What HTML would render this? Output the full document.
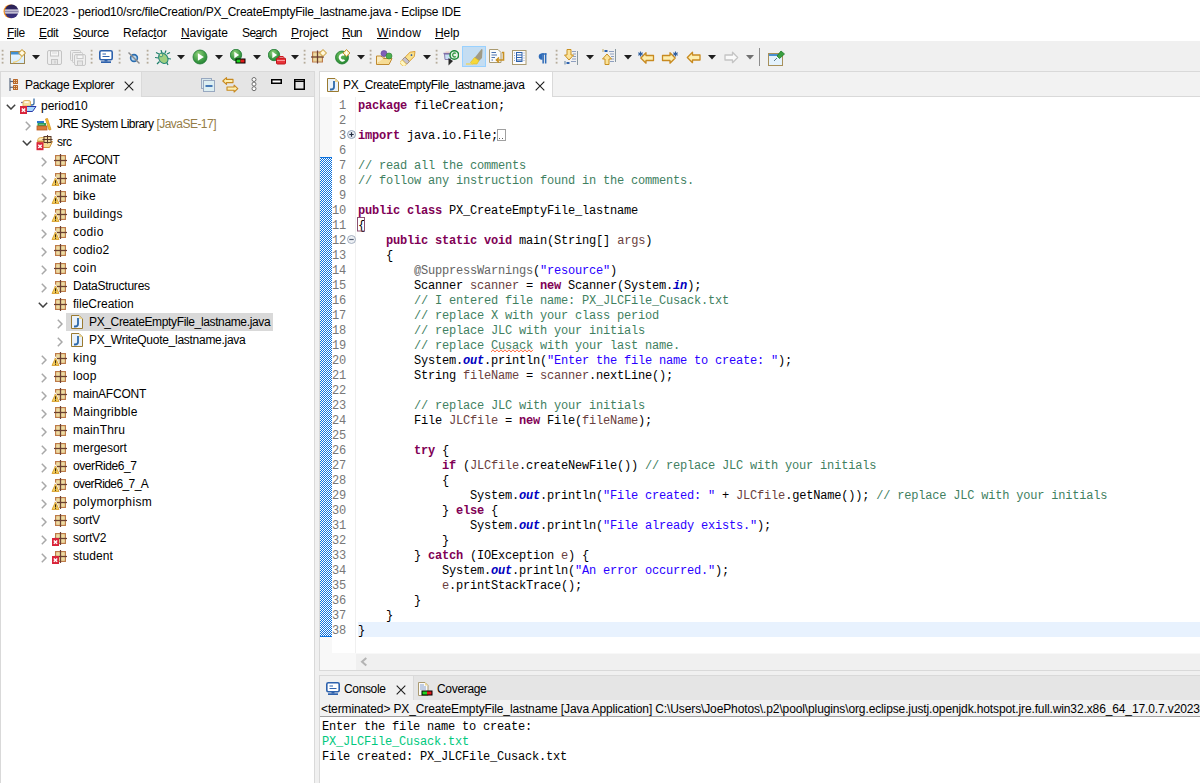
<!DOCTYPE html><html><head><meta charset="utf-8"><style>
html,body{margin:0;padding:0;}
body{width:1200px;height:783px;position:relative;overflow:hidden;background:#fff;font-family:"Liberation Sans",sans-serif;}
.t{position:absolute;white-space:pre;line-height:1;}
.m{position:absolute;white-space:pre;font-family:"Liberation Mono",monospace;font-size:12px;letter-spacing:-0.2px;line-height:15px;}
.k{color:#7f0055;font-weight:bold}
.c{color:#3f7f5f}
.s{color:#2a00ff}
.f{color:#0000c0;font-weight:bold;font-style:italic}
.v{color:#6a3e3e}
.a{color:#646464}
u{text-decoration:none;border-bottom:1px solid currentColor;}
</style></head><body>
<svg width="0" height="0" style="position:absolute"><defs><radialGradient id="pkgrad" cx="0.5" cy="0.5" r="0.6"><stop offset="0" stop-color="#f0e0a8"/><stop offset="0.6" stop-color="#ead49a"/><stop offset="1" stop-color="#d8b47e"/></radialGradient></defs></svg>
<div style="position:absolute;left:0px;top:0px;width:1200px;height:41px;background:#fff;"></div>
<svg style="position:absolute;left:2.5px;top:3.5px" width="17" height="16" viewBox="0 0 17 16"><defs><clipPath id="ecc"><circle cx="8.6" cy="7.4" r="6.8"/></clipPath><linearGradient id="ecg" x1="0" y1="0" x2="0" y2="1"><stop offset="0" stop-color="#2a2050"/><stop offset="1" stop-color="#3a3182"/></linearGradient></defs>
<circle cx="7.4" cy="7.4" r="6.9" fill="#f7941e"/>
<circle cx="8.6" cy="7.4" r="6.8" fill="url(#ecg)"/>
<g clip-path="url(#ecc)"><rect x="0" y="5.5" width="17" height="4" fill="#f4f2f8"/><rect x="0" y="6.5" width="17" height="2" fill="#8f89ad"/></g></svg>
<div class="t" id="t0" style="left:23px;top:5.84px;font-size:12px;color:#000;letter-spacing:-0.225px;">IDE2023 - period10/src/fileCreation/PX_CreateEmptyFile_lastname.java - Eclipse IDE</div>
<div class="t" id="t1" style="left:7px;top:27.34px;font-size:12px;color:#000;letter-spacing:-0.350px;"><span style="text-decoration:underline;text-underline-offset:1px">F</span>ile</div>
<div class="t" id="t2" style="left:39px;top:27.34px;font-size:12px;color:#000;letter-spacing:-0.350px;"><span style="text-decoration:underline;text-underline-offset:1px">E</span>dit</div>
<div class="t" id="t3" style="left:73px;top:27.34px;font-size:12px;color:#000;letter-spacing:-0.350px;"><span style="text-decoration:underline;text-underline-offset:1px">S</span>ource</div>
<div class="t" id="t4" style="left:123px;top:27.34px;font-size:12px;color:#000;letter-spacing:-0.207px;">Refac<span style="text-decoration:underline;text-underline-offset:1px">t</span>or</div>
<div class="t" id="t5" style="left:181px;top:27.34px;font-size:12px;color:#000;letter-spacing:-0.064px;"><span style="text-decoration:underline;text-underline-offset:1px">N</span>avigate</div>
<div class="t" id="t6" style="left:242px;top:27.34px;font-size:12px;color:#000;letter-spacing:-0.590px;">Se<span style="text-decoration:underline;text-underline-offset:1px">a</span>rch</div>
<div class="t" id="t7" style="left:291px;top:27.34px;font-size:12px;color:#000;letter-spacing:-0.017px;"><span style="text-decoration:underline;text-underline-offset:1px">P</span>roject</div>
<div class="t" id="t8" style="left:342px;top:27.34px;font-size:12px;color:#000;letter-spacing:-0.750px;"><span style="text-decoration:underline;text-underline-offset:1px">R</span>un</div>
<div class="t" id="t9" style="left:377px;top:27.34px;font-size:12px;color:#000;letter-spacing:0.250px;"><span style="text-decoration:underline;text-underline-offset:1px">W</span>indow</div>
<div class="t" id="t10" style="left:435px;top:27.34px;font-size:12px;color:#000;letter-spacing:-0.083px;"><span style="text-decoration:underline;text-underline-offset:1px">H</span>elp</div>
<div style="position:absolute;left:0px;top:41px;width:1200px;height:30px;background:#f0f0f0;"></div>
<svg style="position:absolute;left:1px;top:49.3px" width="3" height="16" viewBox="0 0 3 16"><rect x="0.7" y="0.8" width="1.8" height="1.8" fill="#b5ab9a"/><rect x="0.7" y="4.8" width="1.8" height="1.8" fill="#b5ab9a"/><rect x="0.7" y="8.8" width="1.8" height="1.8" fill="#b5ab9a"/><rect x="0.7" y="12.8" width="1.8" height="1.8" fill="#b5ab9a"/></svg>
<svg style="position:absolute;left:9.5px;top:49px" width="16" height="16" viewBox="0 0 16 16"><defs><linearGradient id="nwg" x1="0" y1="0" x2="0" y2="1"><stop offset="0" stop-color="#eaf5ff"/><stop offset="1" stop-color="#d6ecfb"/></linearGradient></defs>
<rect x="0.5" y="2.5" width="14" height="12" fill="url(#nwg)" stroke="#9d8650"/>
<rect x="1" y="3" width="13" height="2.5" fill="#3f8fd2"/>
<path d="M3,13.5 Q11,12 12,6" stroke="#f3d27a" stroke-width="1.3" fill="none"/>
<path d="M12,0.5 L15.5,4 L12,7.5 L8.5,4 Z" fill="#fbe9a6" stroke="#c09030"/>
<path d="M12,2 V6 M10,4 H14" stroke="#fff" stroke-width="1"/></svg>
<svg style="position:absolute;left:31.5px;top:55px" width="8" height="5" viewBox="0 0 8 5"><path d="M0,0 H8 L4,4.5 Z" fill="#1e1e1e"/></svg>
<svg style="position:absolute;left:46.5px;top:49.5px" width="16" height="16" viewBox="0 0 16 16"><rect x="0.5" y="0.5" width="14" height="14" rx="1.5" fill="#efefef" stroke="#c4c4c4"/>
<rect x="3.5" y="1" width="8" height="5" fill="#f6f6f6" stroke="#c4c4c4"/>
<line x1="5" y1="3" x2="10" y2="3" stroke="#d8d8d8"/><rect x="4.5" y="9.5" width="6" height="5" fill="#e6e6e6" stroke="#c4c4c4"/><rect x="7.5" y="10.5" width="1" height="3" fill="#c4c4c4"/></svg>
<svg style="position:absolute;left:69.5px;top:49.5px" width="16" height="16" viewBox="0 0 16 16"><rect x="0.5" y="0.5" width="10" height="10" rx="1" fill="#efefef" stroke="#c8c8c8"/>
<rect x="2.5" y="2.5" width="10" height="10" rx="1" fill="#efefef" stroke="#c8c8c8"/>
<rect x="4.5" y="4.5" width="11" height="11" rx="1.5" fill="#efefef" stroke="#c8c8c8"/>
<rect x="7" y="5" width="6" height="3.5" fill="#f6f6f6" stroke="#c8c8c8"/>
<rect x="7.5" y="11" width="5" height="4.5" fill="#e6e6e6" stroke="#c8c8c8"/></svg>
<svg style="position:absolute;left:90px;top:49.3px" width="3" height="16" viewBox="0 0 3 16"><rect x="0.7" y="0.8" width="1.8" height="1.8" fill="#b5ab9a"/><rect x="0.7" y="4.8" width="1.8" height="1.8" fill="#b5ab9a"/><rect x="0.7" y="8.8" width="1.8" height="1.8" fill="#b5ab9a"/><rect x="0.7" y="12.8" width="1.8" height="1.8" fill="#b5ab9a"/></svg>
<svg style="position:absolute;left:98.5px;top:50px" width="14" height="13" viewBox="0 0 14 13"><rect x="0.8" y="0.8" width="12.4" height="9" rx="1.5" fill="#fff" stroke="#2e62ad" stroke-width="1.6"/>
<line x1="3.5" y1="4" x2="7" y2="4" stroke="#2e62ad" stroke-width="1"/><line x1="3.5" y1="6.5" x2="10.5" y2="6.5" stroke="#2e62ad" stroke-width="1"/>
<rect x="5.5" y="10" width="3" height="1.5" fill="#2e62ad"/><rect x="2" y="11.3" width="10" height="1.7" fill="#2e62ad"/></svg>
<svg style="position:absolute;left:127.5px;top:51.5px" width="12" height="12" viewBox="0 0 12 12"><circle cx="6" cy="6" r="3.4" fill="#bcd9ef" stroke="#2a6db0" stroke-width="1.6"/>
<line x1="0.5" y1="0.5" x2="11.5" y2="11.5" stroke="#8a8a8a" stroke-width="1.4"/></svg>
<svg style="position:absolute;left:118px;top:49.3px" width="3" height="16" viewBox="0 0 3 16"><rect x="0.7" y="0.8" width="1.8" height="1.8" fill="#b5ab9a"/><rect x="0.7" y="4.8" width="1.8" height="1.8" fill="#b5ab9a"/><rect x="0.7" y="8.8" width="1.8" height="1.8" fill="#b5ab9a"/><rect x="0.7" y="12.8" width="1.8" height="1.8" fill="#b5ab9a"/></svg>
<svg style="position:absolute;left:146px;top:49.3px" width="3" height="16" viewBox="0 0 3 16"><rect x="0.7" y="0.8" width="1.8" height="1.8" fill="#b5ab9a"/><rect x="0.7" y="4.8" width="1.8" height="1.8" fill="#b5ab9a"/><rect x="0.7" y="8.8" width="1.8" height="1.8" fill="#b5ab9a"/><rect x="0.7" y="12.8" width="1.8" height="1.8" fill="#b5ab9a"/></svg>
<svg style="position:absolute;left:154.5px;top:49.5px" width="16" height="16" viewBox="0 0 16 16"><g stroke="#1f7f6a" stroke-width="1.2" fill="none">
<path d="M4,4 L1,2.5 M3.5,8 L0,7.5 M4.5,11.5 L2,14 M12,4 L15,2.5 M12.5,8.5 L16,9 M11.5,12 L13,15 M7,3 L6,0 M10,3 L11,0.5"/></g>
<ellipse cx="8.3" cy="8.3" rx="4.3" ry="5.5" transform="rotate(-35 8.3 8.3)" fill="#9fcf7f" stroke="#2b8a7a" stroke-width="1.1"/>
<circle cx="6" cy="5" r="1.8" fill="#cfe6a0" stroke="#2b8a7a" stroke-width="0.8"/></svg>
<svg style="position:absolute;left:176.5px;top:55px" width="8" height="5" viewBox="0 0 8 5"><path d="M0,0 H8 L4,4.5 Z" fill="#1e1e1e"/></svg>
<svg style="position:absolute;left:192px;top:49px" width="16" height="16" viewBox="0 0 16 16"><defs><radialGradient id="rg88" cx="0.4" cy="0.3" r="0.8"><stop offset="0" stop-color="#8fd07a"/><stop offset="0.6" stop-color="#3f9d45"/><stop offset="1" stop-color="#1f7a30"/></radialGradient></defs>
<circle cx="8" cy="8" r="7" fill="url(#rg88)" stroke="#1f7a34" stroke-width="0.8"/>
<path d="M5.9,4.1499999999999995 L11.850000000000001,8 L5.9,11.850000000000001 Z" fill="#fff"/></svg>
<svg style="position:absolute;left:214.5px;top:55px" width="8" height="5" viewBox="0 0 8 5"><path d="M0,0 H8 L4,4.5 Z" fill="#1e1e1e"/></svg>
<svg style="position:absolute;left:229.5px;top:48.5px" width="17" height="16" viewBox="0 0 17 16"><defs><radialGradient id="rg66" cx="0.4" cy="0.3" r="0.8"><stop offset="0" stop-color="#8fd07a"/><stop offset="0.6" stop-color="#3f9d45"/><stop offset="1" stop-color="#1f7a30"/></radialGradient></defs>
<circle cx="6" cy="6" r="5.7" fill="url(#rg66)" stroke="#1f7a34" stroke-width="0.8"/>
<path d="M4.29,2.8649999999999998 L9.135,6 L4.29,9.135 Z" fill="#fff"/><rect x="5.5" y="9.5" width="10" height="5" fill="#000"/><rect x="6.5" y="10.5" width="4" height="3" fill="#1fd21f"/><rect x="10.5" y="10.5" width="4" height="3" fill="#e01b1b"/></svg>
<svg style="position:absolute;left:252.5px;top:55px" width="8" height="5" viewBox="0 0 8 5"><path d="M0,0 H8 L4,4.5 Z" fill="#1e1e1e"/></svg>
<svg style="position:absolute;left:267.5px;top:48.5px" width="18" height="16" viewBox="0 0 18 16"><defs><radialGradient id="rg66" cx="0.4" cy="0.3" r="0.8"><stop offset="0" stop-color="#8fd07a"/><stop offset="0.6" stop-color="#3f9d45"/><stop offset="1" stop-color="#1f7a30"/></radialGradient></defs>
<circle cx="6" cy="6" r="5.7" fill="url(#rg66)" stroke="#1f7a34" stroke-width="0.8"/>
<path d="M4.29,2.8649999999999998 L9.135,6 L4.29,9.135 Z" fill="#fff"/><rect x="8.5" y="9" width="9" height="6" rx="1" fill="#e8343a" stroke="#c0141a"/><rect x="11" y="7.5" width="4" height="2" fill="none" stroke="#d01a20"/><line x1="9" y1="11.5" x2="17" y2="11.5" stroke="#ffb0b0" stroke-width="0.8"/></svg>
<svg style="position:absolute;left:290.5px;top:55px" width="8" height="5" viewBox="0 0 8 5"><path d="M0,0 H8 L4,4.5 Z" fill="#1e1e1e"/></svg>
<svg style="position:absolute;left:303px;top:49.3px" width="3" height="16" viewBox="0 0 3 16"><rect x="0.7" y="0.8" width="1.8" height="1.8" fill="#b5ab9a"/><rect x="0.7" y="4.8" width="1.8" height="1.8" fill="#b5ab9a"/><rect x="0.7" y="8.8" width="1.8" height="1.8" fill="#b5ab9a"/><rect x="0.7" y="12.8" width="1.8" height="1.8" fill="#b5ab9a"/></svg>
<svg style="position:absolute;left:310.5px;top:48.5px" width="16" height="16" viewBox="0 0 16 16"><rect x="1.5" y="3.0" width="10" height="10" fill="#e0c490" stroke="#bd7a4a"/>
<rect x="2" y="3.5" width="4.3" height="4.3" fill="url(#pkgrad)"/><rect x="6.7" y="3.5" width="4.3" height="4.3" fill="url(#pkgrad)"/>
<rect x="2" y="8.2" width="4.3" height="4.3" fill="url(#pkgrad)"/><rect x="6.7" y="8.2" width="4.3" height="4.3" fill="url(#pkgrad)"/>
<line x1="6.5" y1="1.5" x2="6.5" y2="14.5" stroke="#6a4032" stroke-width="1.2"/>
<line x1="0" y1="8.0" x2="13" y2="8.0" stroke="#6a4032" stroke-width="1.2"/><path d="M12,0.5 L15.5,4 L12,7.5 L8.5,4 Z" fill="#fbe9a6" stroke="#c09030" stroke-width="0.9"/><path d="M12,2 V6 M10,4 H14" stroke="#fff" stroke-width="0.9"/></svg>
<svg style="position:absolute;left:335px;top:49px" width="16" height="16" viewBox="0 0 16 16"><defs><radialGradient id="ncg" cx="0.4" cy="0.3" r="0.8"><stop offset="0" stop-color="#6fc060"/><stop offset="1" stop-color="#1b7f2a"/></radialGradient></defs>
<circle cx="7" cy="8.5" r="6.5" fill="url(#ncg)" stroke="#197a2a" stroke-width="0.8"/>
<path d="M9.5,6 A3,3 0 1 0 9.5,11" stroke="#fff" stroke-width="2" fill="none"/><path d="M11.5,0.5 L15.0,4 L11.5,7.5 L8.0,4 Z" fill="#fbe9a6" stroke="#c09030" stroke-width="0.9"/><path d="M11.5,2 V6 M9.5,4 H13.5" stroke="#fff" stroke-width="0.9"/></svg>
<svg style="position:absolute;left:356.5px;top:55px" width="8" height="5" viewBox="0 0 8 5"><path d="M0,0 H8 L4,4.5 Z" fill="#1e1e1e"/></svg>
<svg style="position:absolute;left:369px;top:49.3px" width="3" height="16" viewBox="0 0 3 16"><rect x="0.7" y="0.8" width="1.8" height="1.8" fill="#b5ab9a"/><rect x="0.7" y="4.8" width="1.8" height="1.8" fill="#b5ab9a"/><rect x="0.7" y="8.8" width="1.8" height="1.8" fill="#b5ab9a"/><rect x="0.7" y="12.8" width="1.8" height="1.8" fill="#b5ab9a"/></svg>
<svg style="position:absolute;left:375.5px;top:49.5px" width="17" height="16" viewBox="0 0 17 16"><path d="M0.5,6.5 L0.5,14.5 L13,14.5 L16,8.5 L4,8.5 L1.5,13 Z" fill="#f6dc95" stroke="#c08a30"/>
<path d="M0.5,14 L0.5,6 L5,6 L6,7 L9,7" fill="#fbecc0" stroke="#c08a30"/>
<circle cx="8" cy="3.5" r="3" fill="#8060b8" stroke="#5c3f98" stroke-width="0.6"/>
<circle cx="13" cy="6" r="3" fill="#4caf50" stroke="#2e7d32" stroke-width="0.6"/></svg>
<svg style="position:absolute;left:400px;top:49.5px" width="17" height="16" viewBox="0 0 17 16"><g transform="translate(8.3,8.2) rotate(-45)">
<path d="M-1.5,-3 H5.5 L9.5,0 L5.5,3 H-1.5 Z" fill="#f9e08a" stroke="#d89a30" stroke-width="0.9"/>
<rect x="-5.5" y="-3.2" width="4" height="6.4" rx="0.8" fill="#c4c0cc" stroke="#9a8060" stroke-width="0.8"/>
<path d="M-5.5,-3 H-9 Q-10,0 -9,3 H-5.5 Z" fill="#fff6c0" stroke="#e8b840" stroke-width="0.7"/>
<circle cx="4.5" cy="0" r="0.9" fill="#3060a8"/></g></svg>
<svg style="position:absolute;left:422.5px;top:55px" width="8" height="5" viewBox="0 0 8 5"><path d="M0,0 H8 L4,4.5 Z" fill="#1e1e1e"/></svg>
<svg style="position:absolute;left:435px;top:49.3px" width="3" height="16" viewBox="0 0 3 16"><rect x="0.7" y="0.8" width="1.8" height="1.8" fill="#b5ab9a"/><rect x="0.7" y="4.8" width="1.8" height="1.8" fill="#b5ab9a"/><rect x="0.7" y="8.8" width="1.8" height="1.8" fill="#b5ab9a"/><rect x="0.7" y="12.8" width="1.8" height="1.8" fill="#b5ab9a"/></svg>
<svg style="position:absolute;left:442.5px;top:49.5px" width="16" height="16" viewBox="0 0 16 16"><path d="M1.5,4 H8 L7.5,9.5 H2 Z" fill="#c8e0f4" stroke="#8070a8" stroke-width="0.9"/>
<rect x="0.5" y="2.8" width="8" height="1.4" fill="#8070a8"/><rect x="2.5" y="1.5" width="4" height="1.3" fill="#e8c8c0"/>
<path d="M5.5,8 L5.5,15.5 L10,11 Z" fill="#2a2a2a"/>
<circle cx="11.3" cy="5" r="4.3" fill="#e8f4e8" stroke="#1f8a3a" stroke-width="1.5"/>
<path d="M12.8,3.6 A1.9,1.9 0 1 0 12.8,6.4" stroke="#3a9a4a" stroke-width="1.3" fill="none"/></svg>
<svg style="position:absolute;left:462px;top:46px" width="24" height="21" viewBox="0 0 24 21"><rect x="0.5" y="0.5" width="23" height="20" fill="#c4ddf2" stroke="#99d1ff"/>
<path d="M12.5,12 L19.5,3 L20.5,3.5 L20,12 L16.5,15.5 Z" fill="#a09a84"/>
<path d="M8.5,16.5 L12.5,11.5 L17,14.5 L15,18 L10,18 Z" fill="#f6d83a" stroke="#e0b818" stroke-width="0.6"/>
<path d="M4,18 H11" stroke="#f3d44a" stroke-width="1.2"/></svg>
<svg style="position:absolute;left:489px;top:49px" width="16" height="15" viewBox="0 0 16 15"><path d="M0.5,0.5 H9 L12,3.5 V13.5 H0.5 Z" fill="#fafafa" stroke="#aa9a70"/>
<g stroke="#4a70b0" stroke-width="1"><line x1="2.5" y1="3.5" x2="7" y2="3.5"/><line x1="2.5" y1="6" x2="8" y2="6"/><line x1="2.5" y1="8.5" x2="6" y2="8.5"/><line x1="2.5" y1="11" x2="4" y2="11"/></g>
<path d="M13,3.5 H14.5 V11 H8 M10,8.5 L7.5,11 L10,13.5" stroke="#c89020" stroke-width="1.6" fill="none"/></svg>
<svg style="position:absolute;left:511.5px;top:50px" width="15" height="15" viewBox="0 0 15 15"><rect x="0.5" y="0.5" width="13.5" height="14" fill="#fdfdfd" stroke="#aa9a70"/>
<g fill="#8aa0c8"><rect x="2" y="2.5" width="1" height="1"/><rect x="2" y="5" width="1" height="1"/><rect x="2" y="7.5" width="1" height="1"/><rect x="2" y="10" width="1" height="1"/><rect x="11.5" y="2.5" width="1" height="1"/><rect x="11.5" y="5" width="1" height="1"/><rect x="11.5" y="7.5" width="1" height="1"/><rect x="11.5" y="10" width="1" height="1"/></g>
<rect x="4.5" y="2.5" width="5.5" height="9" fill="none" stroke="#2e62ad"/>
<g stroke="#2e62ad"><line x1="4.5" y1="5" x2="10" y2="5"/><line x1="4.5" y1="7.5" x2="10" y2="7.5"/><line x1="4.5" y1="10" x2="10" y2="10"/></g></svg>
<svg style="position:absolute;left:537.5px;top:53px" width="9" height="11" viewBox="0 0 9 11"><path d="M3.8,0.5 A3.1,3.1 0 0 0 3.8,6.7 H4.6 V0.5 Z" fill="#2e6bb8"/><rect x="3.5" y="0.3" width="5" height="1.4" fill="#2e6bb8"/><rect x="4.4" y="0.3" width="1.5" height="10.2" fill="#2e6bb8"/><rect x="6.9" y="0.3" width="1.5" height="10.2" fill="#2e6bb8"/></svg>
<svg style="position:absolute;left:555px;top:49.3px" width="3" height="16" viewBox="0 0 3 16"><rect x="0.7" y="0.8" width="1.8" height="1.8" fill="#b5ab9a"/><rect x="0.7" y="4.8" width="1.8" height="1.8" fill="#b5ab9a"/><rect x="0.7" y="8.8" width="1.8" height="1.8" fill="#b5ab9a"/><rect x="0.7" y="12.8" width="1.8" height="1.8" fill="#b5ab9a"/></svg>
<svg style="position:absolute;left:563.5px;top:49px" width="15" height="16" viewBox="0 0 15 16"><g stroke="#8fa0c0" stroke-width="1"><line x1="8" y1="2.5" x2="12" y2="2.5"/><line x1="9" y1="5" x2="12" y2="5"/><line x1="9" y1="7.5" x2="12" y2="7.5"/><line x1="8" y1="10" x2="12" y2="10"/><line x1="7" y1="12.5" x2="12" y2="12.5"/></g>
<line x1="13.5" y1="2" x2="13.5" y2="16" stroke="#8898a0" stroke-width="1"/>
<line x1="1" y1="12" x2="1" y2="15.5" stroke="#6080a0" stroke-width="1"/><rect x="2.5" y="13" width="3" height="2" fill="#2e62ad"/>
<path d="M3,0.5 H7 V6 H9.5 L5,11 L0.5,6 H3 Z" fill="#fbe39a" stroke="#c89020"/></svg>
<svg style="position:absolute;left:585.5px;top:55px" width="8" height="5" viewBox="0 0 8 5"><path d="M0,0 H8 L4,4.5 Z" fill="#1e1e1e"/></svg>
<svg style="position:absolute;left:601.5px;top:49px" width="16" height="16" viewBox="0 0 16 16"><g stroke="#8fa0c0" stroke-width="1"><line x1="7" y1="2.5" x2="12" y2="2.5"/><line x1="8" y1="5" x2="12" y2="5"/><line x1="9" y1="7.5" x2="12" y2="7.5"/><line x1="9" y1="10" x2="12" y2="10"/><line x1="8" y1="12.5" x2="12" y2="12.5"/></g>
<line x1="13.5" y1="0" x2="13.5" y2="13" stroke="#8898a0" stroke-width="1"/>
<line x1="1" y1="0" x2="1" y2="3" stroke="#c0a860" stroke-width="1"/><rect x="2.5" y="1" width="3" height="2" fill="#2e62ad"/>
<path d="M3,15.5 H7 V10 H9.5 L5,5 L0.5,10 H3 Z" fill="#fbe39a" stroke="#c89020"/></svg>
<svg style="position:absolute;left:623.5px;top:55px" width="8" height="5" viewBox="0 0 8 5"><path d="M0,0 H8 L4,4.5 Z" fill="#1e1e1e"/></svg>
<svg style="position:absolute;left:637.5px;top:50.5px" width="17" height="13" viewBox="0 0 17 13"><g transform="translate(2,1)"><path d="M0.8,6 L6,0.8 V3.5 H13.5 V8.5 H6 V11.2 Z" fill="#fdeeb0" stroke="#c88a20" stroke-width="1.3" stroke-linejoin="round"/></g><path d="M2.5,0.5 V5.5 M0.3,1.8 L4.7,4.2 M0.3,4.2 L4.7,1.8" stroke="#2e5e9e" stroke-width="1.1"/></svg>
<svg style="position:absolute;left:661px;top:50.5px" width="17" height="13" viewBox="0 0 17 13"><g transform="translate(15,1) scale(-1,1)"><path d="M0.8,6 L6,0.8 V3.5 H13.5 V8.5 H6 V11.2 Z" fill="#fdeeb0" stroke="#c88a20" stroke-width="1.3" stroke-linejoin="round"/></g><path d="M14.5,0.5 V5.5 M12.3,1.8 L16.7,4.2 M12.3,4.2 L16.7,1.8" stroke="#2e5e9e" stroke-width="1.1"/></svg>
<svg style="position:absolute;left:685.5px;top:50.5px" width="15" height="13" viewBox="0 0 15 13"><g transform="translate(0.5,0.5)"><path d="M0.8,6 L6,0.8 V3.5 H13.5 V8.5 H6 V11.2 Z" fill="#fdeeb0" stroke="#c88a20" stroke-width="1.3" stroke-linejoin="round"/></g></svg>
<svg style="position:absolute;left:707.5px;top:55px" width="8" height="5" viewBox="0 0 8 5"><path d="M0,0 H8 L4,4.5 Z" fill="#1e1e1e"/></svg>
<svg style="position:absolute;left:723.5px;top:50.5px" width="15" height="13" viewBox="0 0 15 13"><g transform="translate(14.5,0.5) scale(-1,1)"><path d="M0.8,6 L6,0.8 V3.5 H13.5 V8.5 H6 V11.2 Z" fill="#fafafa" stroke="#c4c4c4" stroke-width="1.3" stroke-linejoin="round"/></g></svg>
<svg style="position:absolute;left:745.5px;top:55px" width="8" height="5" viewBox="0 0 8 5"><path d="M0,0 H8 L4,4.5 Z" fill="#707070"/></svg>
<div style="position:absolute;left:759px;top:48px;width:1px;height:18px;background:#8c8c8c;"></div>
<svg style="position:absolute;left:767.5px;top:49.5px" width="17" height="16" viewBox="0 0 17 16"><rect x="0.5" y="3.5" width="14" height="12" fill="#e4f2fc" stroke="#a8905a"/>
<rect x="1" y="4" width="13" height="2" fill="#4a90d0"/>
<path d="M6,11 L9,8" stroke="#5a7a8a" stroke-width="1"/>
<path d="M9,6 L13,1 L16.5,4 L11.5,8.5 Z" fill="#3aa040" stroke="#1e7a28" stroke-width="0.8"/></svg>
<div style="position:absolute;left:0px;top:71px;width:1200px;height:712px;background:#f0f0f0;"></div>
<div style="position:absolute;left:0px;top:71px;width:315px;height:712px;background:#d9d9d9;"></div>
<div style="position:absolute;left:1px;top:72px;width:313px;height:711px;background:#fff;"></div>
<div style="position:absolute;left:1px;top:72px;width:313px;height:24px;background:#e5e5e5;"></div>
<div style="position:absolute;left:1px;top:72px;width:140px;height:24px;background:#f2f2f2;"></div>
<div style="position:absolute;left:141px;top:72px;width:1px;height:24px;background:#dadada;"></div>
<div style="position:absolute;left:1px;top:96px;width:313px;height:1px;background:#d9d9d9;"></div>
<div style="position:absolute;left:1px;top:96px;width:140px;height:1px;background:#f2f2f2;"></div>
<div class="t" id="t11" style="left:25px;top:78.84px;font-size:12px;color:#000;letter-spacing:-0.350px;">Package Explorer</div>
<svg style="position:absolute;left:8.5px;top:77.5px" width="11" height="14" viewBox="0 0 11 14"><line x1="1" y1="0" x2="1" y2="13" stroke="#5a6a80" stroke-width="1.2"/>
<line x1="1" y1="3.5" x2="4" y2="3.5" stroke="#5a6a80" stroke-width="1.2"/><line x1="1" y1="9.3" x2="4" y2="9.3" stroke="#5a6a80" stroke-width="1.2"/>
<rect x="4" y="1" width="5" height="5" rx="0.6" fill="#b8682a"/><rect x="4" y="7" width="5" height="5" rx="0.6" fill="#b8682a"/>
<g fill="#f0d0a0"><rect x="5" y="2" width="1" height="1"/><rect x="7" y="2" width="1" height="1"/><rect x="5" y="4" width="1" height="1"/><rect x="7" y="4" width="1" height="1"/><rect x="5" y="8" width="1" height="1"/><rect x="7" y="8" width="1" height="1"/><rect x="5" y="10" width="1" height="1"/><rect x="7" y="10" width="1" height="1"/></g></svg>
<svg style="position:absolute;left:123.5px;top:80.5px" width="10" height="10" viewBox="0 0 10 10"><path d="M0.7,0.7 L9.3,9.3 M9.3,0.7 L0.7,9.3" stroke="#1e1e1e" stroke-width="1.1"/></svg>
<svg style="position:absolute;left:200.5px;top:77.5px" width="14" height="14" viewBox="0 0 14 14"><rect x="0.5" y="0.5" width="10" height="10" fill="#d8e8ee" stroke="#98a8c0"/>
<rect x="2.5" y="2.5" width="11" height="11" fill="#dceef2" stroke="#98a8c0"/>
<line x1="4.5" y1="8" x2="11.5" y2="8" stroke="#1e5aa8" stroke-width="1.6"/></svg>
<svg style="position:absolute;left:222px;top:76.5px" width="17" height="16" viewBox="0 0 17 16"><path d="M0.8,4 L4.5,0.6 V2.4 H11 V5.6 H4.5 V7.4 Z" fill="#fdeeb0" stroke="#c88a20" stroke-width="1.1" stroke-linejoin="round"/>
<path d="M15.8,11.6 L12.1,8.2 V10 H5 V13.2 H12.1 V15 Z" fill="#fdeeb0" stroke="#c88a20" stroke-width="1.1" stroke-linejoin="round"/></svg>
<svg style="position:absolute;left:250.5px;top:77px" width="6" height="15" viewBox="0 0 6 15"><circle cx="3" cy="2.5" r="2" fill="#fff" stroke="#707070" stroke-width="1"/><circle cx="3" cy="7.1" r="2" fill="#fff" stroke="#707070" stroke-width="1"/><circle cx="3" cy="11.7" r="2" fill="#fff" stroke="#707070" stroke-width="1"/></svg>
<svg style="position:absolute;left:270.5px;top:78.5px" width="11" height="5" viewBox="0 0 11 5"><rect x="0.75" y="0.75" width="9.5" height="3.5" fill="#fff" stroke="#000" stroke-width="1.5"/></svg>
<svg style="position:absolute;left:293.5px;top:78.5px" width="11" height="11" viewBox="0 0 11 11"><rect x="0.75" y="0.75" width="9.5" height="9.5" fill="none" stroke="#000" stroke-width="1.5"/><line x1="1" y1="2.5" x2="10" y2="2.5" stroke="#000" stroke-width="1"/></svg>
<div style="position:absolute;left:66px;top:313px;width:207px;height:18px;background:#d9d9d9;"></div>
<div class="t" id="t12" style="left:41px;top:100.34px;font-size:12px;color:#000;letter-spacing:-0.021px;">period10</div>
<svg style="position:absolute;left:6.2px;top:103.5px" width="10" height="6" viewBox="0 0 10 6"><path d="M0.8,0.8 L5,5 L9.2,0.8" stroke="#404040" stroke-width="1.5" fill="none"/></svg>
<svg style="position:absolute;left:19.5px;top:97px" width="18" height="18" viewBox="0 0 18 18"><path d="M1,5.5 H11" stroke="#7a6a9a" stroke-width="1.2"/>
<path d="M3,9 V5 Q3,3.5 5,3.5 H9 Q10.5,3.5 10.5,5 V9 Z" fill="#f8e0a0" stroke="#d8b060" stroke-width="0.9"/>
<rect x="4.5" y="4.5" width="4" height="1.3" fill="#fff"/>
<path d="M2,9.5 H16 L12.5,14.5 H2 Z" fill="#a8d8ff" stroke="#2a3aa8" stroke-width="1"/>
<path d="M14,1.5 V6 Q14,8 12,8 H11" stroke="#3a6ea5" stroke-width="1.3" fill="none"/><rect x="0" y="9" width="7" height="8" fill="#d9243a"/><path d="M1.8,11.5 L5.2,14.8 M5.2,11.5 L1.8,14.8" stroke="#fff" stroke-width="1.4"/></svg>
<div class="t" id="t13" style="left:57px;top:118.34px;font-size:12px;color:#000;letter-spacing:-0.526px;">JRE System Library <span style="color:#957d47">[JavaSE-17]</span></div>
<svg style="position:absolute;left:24.7px;top:120.5px" width="6" height="10" viewBox="0 0 6 10"><path d="M0.8,0.8 L5,5 L0.8,9.2" stroke="#a8a8a8" stroke-width="1.5" fill="none"/></svg>
<svg style="position:absolute;left:36px;top:115px" width="16" height="18" viewBox="0 0 16 18"><rect x="1" y="6" width="7" height="2" fill="#2b78c8"/>
<rect x="1.5" y="8" width="8.5" height="3" fill="#2ea05a"/><line x1="3" y1="9.5" x2="8" y2="9.5" stroke="#8fd0a0" stroke-width="0.6"/>
<rect x="1" y="11" width="10" height="4" fill="#d87a3a" stroke="#b85a20" stroke-width="0.8"/>
<path d="M9.5,4 L11.5,3.5 L15,14.5 L13,15 Z" fill="#f0c030" stroke="#d89020" stroke-width="0.8"/></svg>
<div class="t" id="t14" style="left:57px;top:136.34px;font-size:12px;color:#000;letter-spacing:-0.450px;">src</div>
<svg style="position:absolute;left:22.2px;top:139.5px" width="10" height="6" viewBox="0 0 10 6"><path d="M0.8,0.8 L5,5 L9.2,0.8" stroke="#404040" stroke-width="1.5" fill="none"/></svg>
<svg style="position:absolute;left:35.5px;top:133px" width="18" height="18" viewBox="0 0 18 18"><path d="M1.5,8 Q1.5,4.5 4.5,4.5 H8 V8 Z" fill="#fbe8b0" stroke="#d8a850" stroke-width="0.9"/>
<path d="M1.5,8.5 H16.5 L13.5,14.5 H1.5 Z" fill="#f6dc95" stroke="#c88a30" stroke-width="0.9"/>
<rect x="8" y="3.5" width="7" height="6" fill="#efd8a0" stroke="#5a3a2a" stroke-width="1"/>
<line x1="11.5" y1="2" x2="11.5" y2="10.5" stroke="#5a3a2a" stroke-width="1"/><line x1="6.5" y1="6.5" x2="16.5" y2="6.5" stroke="#5a3a2a" stroke-width="1"/><rect x="0.5" y="9.2" width="7" height="8" fill="#d9243a"/><path d="M2.3,11.7 L5.7,15.0 M5.7,11.7 L2.3,15.0" stroke="#fff" stroke-width="1.4"/></svg>
<div class="t" id="t15" style="left:73px;top:154.34px;font-size:12px;color:#000;letter-spacing:-0.510px;">AFCONT</div>
<svg style="position:absolute;left:40.7px;top:156.5px" width="6" height="10" viewBox="0 0 6 10"><path d="M0.8,0.8 L5,5 L0.8,9.2" stroke="#a8a8a8" stroke-width="1.5" fill="none"/></svg>
<svg style="position:absolute;left:51px;top:151px" width="18" height="18" viewBox="0 0 18 18"><rect x="4.5" y="4.5" width="10" height="10" fill="#e0c490" stroke="#bd7a4a"/>
<rect x="5" y="5" width="4.3" height="4.3" fill="url(#pkgrad)"/><rect x="9.7" y="5" width="4.3" height="4.3" fill="url(#pkgrad)"/>
<rect x="5" y="9.7" width="4.3" height="4.3" fill="url(#pkgrad)"/><rect x="9.7" y="9.7" width="4.3" height="4.3" fill="url(#pkgrad)"/>
<line x1="9.5" y1="3" x2="9.5" y2="16" stroke="#6a4032" stroke-width="1.2"/>
<line x1="3" y1="9.5" x2="16" y2="9.5" stroke="#6a4032" stroke-width="1.2"/></svg>
<div class="t" id="t16" style="left:73px;top:172.34px;font-size:12px;color:#000;letter-spacing:0.100px;">animate</div>
<svg style="position:absolute;left:40.7px;top:174.5px" width="6" height="10" viewBox="0 0 6 10"><path d="M0.8,0.8 L5,5 L0.8,9.2" stroke="#a8a8a8" stroke-width="1.5" fill="none"/></svg>
<svg style="position:absolute;left:51px;top:169px" width="18" height="18" viewBox="0 0 18 18"><rect x="4.5" y="4.5" width="10" height="10" fill="#e0c490" stroke="#bd7a4a"/>
<rect x="5" y="5" width="4.3" height="4.3" fill="url(#pkgrad)"/><rect x="9.7" y="5" width="4.3" height="4.3" fill="url(#pkgrad)"/>
<rect x="5" y="9.7" width="4.3" height="4.3" fill="url(#pkgrad)"/><rect x="9.7" y="9.7" width="4.3" height="4.3" fill="url(#pkgrad)"/>
<line x1="9.5" y1="3" x2="9.5" y2="16" stroke="#6a4032" stroke-width="1.2"/>
<line x1="3" y1="9.5" x2="16" y2="9.5" stroke="#6a4032" stroke-width="1.2"/><path d="M4.5,7.8 L9,17.2 H0 Z" fill="#fff" stroke="#fff" stroke-width="1" stroke-linejoin="round"/><path d="M4.5,9 L8,16.5 H1 Z" fill="#f6cf5a" stroke="#d8a030" stroke-width="0.9" stroke-linejoin="round"/><rect x="4" y="11.3" width="1.1" height="3" fill="#3a2a10"/><rect x="4" y="14.8" width="1.1" height="1" fill="#3a2a10"/></svg>
<div class="t" id="t17" style="left:73px;top:190.34px;font-size:12px;color:#000;letter-spacing:0.183px;">bike</div>
<svg style="position:absolute;left:40.7px;top:192.5px" width="6" height="10" viewBox="0 0 6 10"><path d="M0.8,0.8 L5,5 L0.8,9.2" stroke="#a8a8a8" stroke-width="1.5" fill="none"/></svg>
<svg style="position:absolute;left:51px;top:187px" width="18" height="18" viewBox="0 0 18 18"><rect x="4.5" y="4.5" width="10" height="10" fill="#e0c490" stroke="#bd7a4a"/>
<rect x="5" y="5" width="4.3" height="4.3" fill="url(#pkgrad)"/><rect x="9.7" y="5" width="4.3" height="4.3" fill="url(#pkgrad)"/>
<rect x="5" y="9.7" width="4.3" height="4.3" fill="url(#pkgrad)"/><rect x="9.7" y="9.7" width="4.3" height="4.3" fill="url(#pkgrad)"/>
<line x1="9.5" y1="3" x2="9.5" y2="16" stroke="#6a4032" stroke-width="1.2"/>
<line x1="3" y1="9.5" x2="16" y2="9.5" stroke="#6a4032" stroke-width="1.2"/><path d="M4.5,7.8 L9,17.2 H0 Z" fill="#fff" stroke="#fff" stroke-width="1" stroke-linejoin="round"/><path d="M4.5,9 L8,16.5 H1 Z" fill="#f6cf5a" stroke="#d8a030" stroke-width="0.9" stroke-linejoin="round"/><rect x="4" y="11.3" width="1.1" height="3" fill="#3a2a10"/><rect x="4" y="14.8" width="1.1" height="1" fill="#3a2a10"/></svg>
<div class="t" id="t18" style="left:73px;top:208.34px;font-size:12px;color:#000;letter-spacing:0.275px;">buildings</div>
<svg style="position:absolute;left:40.7px;top:210.5px" width="6" height="10" viewBox="0 0 6 10"><path d="M0.8,0.8 L5,5 L0.8,9.2" stroke="#a8a8a8" stroke-width="1.5" fill="none"/></svg>
<svg style="position:absolute;left:51px;top:205px" width="18" height="18" viewBox="0 0 18 18"><rect x="4.5" y="4.5" width="10" height="10" fill="#e0c490" stroke="#bd7a4a"/>
<rect x="5" y="5" width="4.3" height="4.3" fill="url(#pkgrad)"/><rect x="9.7" y="5" width="4.3" height="4.3" fill="url(#pkgrad)"/>
<rect x="5" y="9.7" width="4.3" height="4.3" fill="url(#pkgrad)"/><rect x="9.7" y="9.7" width="4.3" height="4.3" fill="url(#pkgrad)"/>
<line x1="9.5" y1="3" x2="9.5" y2="16" stroke="#6a4032" stroke-width="1.2"/>
<line x1="3" y1="9.5" x2="16" y2="9.5" stroke="#6a4032" stroke-width="1.2"/><path d="M4.5,7.8 L9,17.2 H0 Z" fill="#fff" stroke="#fff" stroke-width="1" stroke-linejoin="round"/><path d="M4.5,9 L8,16.5 H1 Z" fill="#f6cf5a" stroke="#d8a030" stroke-width="0.9" stroke-linejoin="round"/><rect x="4" y="11.3" width="1.1" height="3" fill="#3a2a10"/><rect x="4" y="14.8" width="1.1" height="1" fill="#3a2a10"/></svg>
<div class="t" id="t19" style="left:73px;top:226.34px;font-size:12px;color:#000;letter-spacing:0.425px;">codio</div>
<svg style="position:absolute;left:40.7px;top:228.5px" width="6" height="10" viewBox="0 0 6 10"><path d="M0.8,0.8 L5,5 L0.8,9.2" stroke="#a8a8a8" stroke-width="1.5" fill="none"/></svg>
<svg style="position:absolute;left:51px;top:223px" width="18" height="18" viewBox="0 0 18 18"><rect x="4.5" y="4.5" width="10" height="10" fill="#e0c490" stroke="#bd7a4a"/>
<rect x="5" y="5" width="4.3" height="4.3" fill="url(#pkgrad)"/><rect x="9.7" y="5" width="4.3" height="4.3" fill="url(#pkgrad)"/>
<rect x="5" y="9.7" width="4.3" height="4.3" fill="url(#pkgrad)"/><rect x="9.7" y="9.7" width="4.3" height="4.3" fill="url(#pkgrad)"/>
<line x1="9.5" y1="3" x2="9.5" y2="16" stroke="#6a4032" stroke-width="1.2"/>
<line x1="3" y1="9.5" x2="16" y2="9.5" stroke="#6a4032" stroke-width="1.2"/><path d="M4.5,7.8 L9,17.2 H0 Z" fill="#fff" stroke="#fff" stroke-width="1" stroke-linejoin="round"/><path d="M4.5,9 L8,16.5 H1 Z" fill="#f6cf5a" stroke="#d8a030" stroke-width="0.9" stroke-linejoin="round"/><rect x="4" y="11.3" width="1.1" height="3" fill="#3a2a10"/><rect x="4" y="14.8" width="1.1" height="1" fill="#3a2a10"/></svg>
<div class="t" id="t20" style="left:73px;top:244.34px;font-size:12px;color:#000;letter-spacing:0.170px;">codio2</div>
<svg style="position:absolute;left:40.7px;top:246.5px" width="6" height="10" viewBox="0 0 6 10"><path d="M0.8,0.8 L5,5 L0.8,9.2" stroke="#a8a8a8" stroke-width="1.5" fill="none"/></svg>
<svg style="position:absolute;left:51px;top:241px" width="18" height="18" viewBox="0 0 18 18"><rect x="4.5" y="4.5" width="10" height="10" fill="#e0c490" stroke="#bd7a4a"/>
<rect x="5" y="5" width="4.3" height="4.3" fill="url(#pkgrad)"/><rect x="9.7" y="5" width="4.3" height="4.3" fill="url(#pkgrad)"/>
<rect x="5" y="9.7" width="4.3" height="4.3" fill="url(#pkgrad)"/><rect x="9.7" y="9.7" width="4.3" height="4.3" fill="url(#pkgrad)"/>
<line x1="9.5" y1="3" x2="9.5" y2="16" stroke="#6a4032" stroke-width="1.2"/>
<line x1="3" y1="9.5" x2="16" y2="9.5" stroke="#6a4032" stroke-width="1.2"/></svg>
<div class="t" id="t21" style="left:73px;top:262.34px;font-size:12px;color:#000;letter-spacing:0.450px;">coin</div>
<svg style="position:absolute;left:40.7px;top:264.5px" width="6" height="10" viewBox="0 0 6 10"><path d="M0.8,0.8 L5,5 L0.8,9.2" stroke="#a8a8a8" stroke-width="1.5" fill="none"/></svg>
<svg style="position:absolute;left:51px;top:259px" width="18" height="18" viewBox="0 0 18 18"><rect x="4.5" y="4.5" width="10" height="10" fill="#e0c490" stroke="#bd7a4a"/>
<rect x="5" y="5" width="4.3" height="4.3" fill="url(#pkgrad)"/><rect x="9.7" y="5" width="4.3" height="4.3" fill="url(#pkgrad)"/>
<rect x="5" y="9.7" width="4.3" height="4.3" fill="url(#pkgrad)"/><rect x="9.7" y="9.7" width="4.3" height="4.3" fill="url(#pkgrad)"/>
<line x1="9.5" y1="3" x2="9.5" y2="16" stroke="#6a4032" stroke-width="1.2"/>
<line x1="3" y1="9.5" x2="16" y2="9.5" stroke="#6a4032" stroke-width="1.2"/></svg>
<div class="t" id="t22" style="left:73px;top:280.34px;font-size:12px;color:#000;letter-spacing:-0.227px;">DataStructures</div>
<svg style="position:absolute;left:40.7px;top:282.5px" width="6" height="10" viewBox="0 0 6 10"><path d="M0.8,0.8 L5,5 L0.8,9.2" stroke="#a8a8a8" stroke-width="1.5" fill="none"/></svg>
<svg style="position:absolute;left:51px;top:277px" width="18" height="18" viewBox="0 0 18 18"><rect x="4.5" y="4.5" width="10" height="10" fill="#e0c490" stroke="#bd7a4a"/>
<rect x="5" y="5" width="4.3" height="4.3" fill="url(#pkgrad)"/><rect x="9.7" y="5" width="4.3" height="4.3" fill="url(#pkgrad)"/>
<rect x="5" y="9.7" width="4.3" height="4.3" fill="url(#pkgrad)"/><rect x="9.7" y="9.7" width="4.3" height="4.3" fill="url(#pkgrad)"/>
<line x1="9.5" y1="3" x2="9.5" y2="16" stroke="#6a4032" stroke-width="1.2"/>
<line x1="3" y1="9.5" x2="16" y2="9.5" stroke="#6a4032" stroke-width="1.2"/><path d="M4.5,7.8 L9,17.2 H0 Z" fill="#fff" stroke="#fff" stroke-width="1" stroke-linejoin="round"/><path d="M4.5,9 L8,16.5 H1 Z" fill="#f6cf5a" stroke="#d8a030" stroke-width="0.9" stroke-linejoin="round"/><rect x="4" y="11.3" width="1.1" height="3" fill="#3a2a10"/><rect x="4" y="14.8" width="1.1" height="1" fill="#3a2a10"/></svg>
<div class="t" id="t23" style="left:73px;top:298.34px;font-size:12px;color:#000;letter-spacing:-0.005px;">fileCreation</div>
<svg style="position:absolute;left:38.2px;top:301.5px" width="10" height="6" viewBox="0 0 10 6"><path d="M0.8,0.8 L5,5 L9.2,0.8" stroke="#404040" stroke-width="1.5" fill="none"/></svg>
<svg style="position:absolute;left:51px;top:295px" width="18" height="18" viewBox="0 0 18 18"><rect x="4.5" y="4.5" width="10" height="10" fill="#e0c490" stroke="#bd7a4a"/>
<rect x="5" y="5" width="4.3" height="4.3" fill="url(#pkgrad)"/><rect x="9.7" y="5" width="4.3" height="4.3" fill="url(#pkgrad)"/>
<rect x="5" y="9.7" width="4.3" height="4.3" fill="url(#pkgrad)"/><rect x="9.7" y="9.7" width="4.3" height="4.3" fill="url(#pkgrad)"/>
<line x1="9.5" y1="3" x2="9.5" y2="16" stroke="#6a4032" stroke-width="1.2"/>
<line x1="3" y1="9.5" x2="16" y2="9.5" stroke="#6a4032" stroke-width="1.2"/></svg>
<div class="t" id="t24" style="left:89px;top:316.34px;font-size:12px;color:#000;letter-spacing:-0.360px;">PX_CreateEmptyFile_lastname.java</div>
<svg style="position:absolute;left:56.7px;top:318.5px" width="6" height="10" viewBox="0 0 6 10"><path d="M0.8,0.8 L5,5 L0.8,9.2" stroke="#a8a8a8" stroke-width="1.5" fill="none"/></svg>
<svg style="position:absolute;left:70.5px;top:315px" width="12" height="14" viewBox="0 0 12 14"><path d="M0.5,0.5 H8 L11.5,4 V13.5 H0.5 Z" fill="#eaf2fa" stroke="#9a7a30"/>
<path d="M8,0.5 V4 H11.5 Z" fill="#f0d890"/>
<path d="M7,3 V9 Q7,11.5 4,11.5 H3" stroke="#2c68a8" stroke-width="1.8" fill="none"/></svg>
<div class="t" id="t25" style="left:89px;top:334.34px;font-size:12px;color:#000;letter-spacing:-0.273px;">PX_WriteQuote_lastname.java</div>
<svg style="position:absolute;left:56.7px;top:336.5px" width="6" height="10" viewBox="0 0 6 10"><path d="M0.8,0.8 L5,5 L0.8,9.2" stroke="#a8a8a8" stroke-width="1.5" fill="none"/></svg>
<svg style="position:absolute;left:70.5px;top:333px" width="12" height="14" viewBox="0 0 12 14"><path d="M0.5,0.5 H8 L11.5,4 V13.5 H0.5 Z" fill="#eaf2fa" stroke="#9a7a30"/>
<path d="M8,0.5 V4 H11.5 Z" fill="#f0d890"/>
<path d="M7,3 V9 Q7,11.5 4,11.5 H3" stroke="#2c68a8" stroke-width="1.8" fill="none"/></svg>
<div class="t" id="t26" style="left:73px;top:352.34px;font-size:12px;color:#000;letter-spacing:0.450px;">king</div>
<svg style="position:absolute;left:40.7px;top:354.5px" width="6" height="10" viewBox="0 0 6 10"><path d="M0.8,0.8 L5,5 L0.8,9.2" stroke="#a8a8a8" stroke-width="1.5" fill="none"/></svg>
<svg style="position:absolute;left:51px;top:349px" width="18" height="18" viewBox="0 0 18 18"><rect x="4.5" y="4.5" width="10" height="10" fill="#e0c490" stroke="#bd7a4a"/>
<rect x="5" y="5" width="4.3" height="4.3" fill="url(#pkgrad)"/><rect x="9.7" y="5" width="4.3" height="4.3" fill="url(#pkgrad)"/>
<rect x="5" y="9.7" width="4.3" height="4.3" fill="url(#pkgrad)"/><rect x="9.7" y="9.7" width="4.3" height="4.3" fill="url(#pkgrad)"/>
<line x1="9.5" y1="3" x2="9.5" y2="16" stroke="#6a4032" stroke-width="1.2"/>
<line x1="3" y1="9.5" x2="16" y2="9.5" stroke="#6a4032" stroke-width="1.2"/><path d="M4.5,7.8 L9,17.2 H0 Z" fill="#fff" stroke="#fff" stroke-width="1" stroke-linejoin="round"/><path d="M4.5,9 L8,16.5 H1 Z" fill="#f6cf5a" stroke="#d8a030" stroke-width="0.9" stroke-linejoin="round"/><rect x="4" y="11.3" width="1.1" height="3" fill="#3a2a10"/><rect x="4" y="14.8" width="1.1" height="1" fill="#3a2a10"/></svg>
<div class="t" id="t27" style="left:73px;top:370.34px;font-size:12px;color:#000;letter-spacing:0.250px;">loop</div>
<svg style="position:absolute;left:40.7px;top:372.5px" width="6" height="10" viewBox="0 0 6 10"><path d="M0.8,0.8 L5,5 L0.8,9.2" stroke="#a8a8a8" stroke-width="1.5" fill="none"/></svg>
<svg style="position:absolute;left:51px;top:367px" width="18" height="18" viewBox="0 0 18 18"><rect x="4.5" y="4.5" width="10" height="10" fill="#e0c490" stroke="#bd7a4a"/>
<rect x="5" y="5" width="4.3" height="4.3" fill="url(#pkgrad)"/><rect x="9.7" y="5" width="4.3" height="4.3" fill="url(#pkgrad)"/>
<rect x="5" y="9.7" width="4.3" height="4.3" fill="url(#pkgrad)"/><rect x="9.7" y="9.7" width="4.3" height="4.3" fill="url(#pkgrad)"/>
<line x1="9.5" y1="3" x2="9.5" y2="16" stroke="#6a4032" stroke-width="1.2"/>
<line x1="3" y1="9.5" x2="16" y2="9.5" stroke="#6a4032" stroke-width="1.2"/></svg>
<div class="t" id="t28" style="left:73px;top:388.34px;font-size:12px;color:#000;letter-spacing:-0.228px;">mainAFCONT</div>
<svg style="position:absolute;left:40.7px;top:390.5px" width="6" height="10" viewBox="0 0 6 10"><path d="M0.8,0.8 L5,5 L0.8,9.2" stroke="#a8a8a8" stroke-width="1.5" fill="none"/></svg>
<svg style="position:absolute;left:51px;top:385px" width="18" height="18" viewBox="0 0 18 18"><rect x="4.5" y="4.5" width="10" height="10" fill="#e0c490" stroke="#bd7a4a"/>
<rect x="5" y="5" width="4.3" height="4.3" fill="url(#pkgrad)"/><rect x="9.7" y="5" width="4.3" height="4.3" fill="url(#pkgrad)"/>
<rect x="5" y="9.7" width="4.3" height="4.3" fill="url(#pkgrad)"/><rect x="9.7" y="9.7" width="4.3" height="4.3" fill="url(#pkgrad)"/>
<line x1="9.5" y1="3" x2="9.5" y2="16" stroke="#6a4032" stroke-width="1.2"/>
<line x1="3" y1="9.5" x2="16" y2="9.5" stroke="#6a4032" stroke-width="1.2"/><path d="M4.5,7.8 L9,17.2 H0 Z" fill="#fff" stroke="#fff" stroke-width="1" stroke-linejoin="round"/><path d="M4.5,9 L8,16.5 H1 Z" fill="#f6cf5a" stroke="#d8a030" stroke-width="0.9" stroke-linejoin="round"/><rect x="4" y="11.3" width="1.1" height="3" fill="#3a2a10"/><rect x="4" y="14.8" width="1.1" height="1" fill="#3a2a10"/></svg>
<div class="t" id="t29" style="left:73px;top:406.34px;font-size:12px;color:#000;letter-spacing:0.240px;">Maingribble</div>
<svg style="position:absolute;left:40.7px;top:408.5px" width="6" height="10" viewBox="0 0 6 10"><path d="M0.8,0.8 L5,5 L0.8,9.2" stroke="#a8a8a8" stroke-width="1.5" fill="none"/></svg>
<svg style="position:absolute;left:51px;top:403px" width="18" height="18" viewBox="0 0 18 18"><rect x="4.5" y="4.5" width="10" height="10" fill="#e0c490" stroke="#bd7a4a"/>
<rect x="5" y="5" width="4.3" height="4.3" fill="url(#pkgrad)"/><rect x="9.7" y="5" width="4.3" height="4.3" fill="url(#pkgrad)"/>
<rect x="5" y="9.7" width="4.3" height="4.3" fill="url(#pkgrad)"/><rect x="9.7" y="9.7" width="4.3" height="4.3" fill="url(#pkgrad)"/>
<line x1="9.5" y1="3" x2="9.5" y2="16" stroke="#6a4032" stroke-width="1.2"/>
<line x1="3" y1="9.5" x2="16" y2="9.5" stroke="#6a4032" stroke-width="1.2"/></svg>
<div class="t" id="t30" style="left:73px;top:424.34px;font-size:12px;color:#000;letter-spacing:0.179px;">mainThru</div>
<svg style="position:absolute;left:40.7px;top:426.5px" width="6" height="10" viewBox="0 0 6 10"><path d="M0.8,0.8 L5,5 L0.8,9.2" stroke="#a8a8a8" stroke-width="1.5" fill="none"/></svg>
<svg style="position:absolute;left:51px;top:421px" width="18" height="18" viewBox="0 0 18 18"><rect x="4.5" y="4.5" width="10" height="10" fill="#e0c490" stroke="#bd7a4a"/>
<rect x="5" y="5" width="4.3" height="4.3" fill="url(#pkgrad)"/><rect x="9.7" y="5" width="4.3" height="4.3" fill="url(#pkgrad)"/>
<rect x="5" y="9.7" width="4.3" height="4.3" fill="url(#pkgrad)"/><rect x="9.7" y="9.7" width="4.3" height="4.3" fill="url(#pkgrad)"/>
<line x1="9.5" y1="3" x2="9.5" y2="16" stroke="#6a4032" stroke-width="1.2"/>
<line x1="3" y1="9.5" x2="16" y2="9.5" stroke="#6a4032" stroke-width="1.2"/></svg>
<div class="t" id="t31" style="left:73px;top:442.34px;font-size:12px;color:#000;letter-spacing:-0.012px;">mergesort</div>
<svg style="position:absolute;left:40.7px;top:444.5px" width="6" height="10" viewBox="0 0 6 10"><path d="M0.8,0.8 L5,5 L0.8,9.2" stroke="#a8a8a8" stroke-width="1.5" fill="none"/></svg>
<svg style="position:absolute;left:51px;top:439px" width="18" height="18" viewBox="0 0 18 18"><rect x="4.5" y="4.5" width="10" height="10" fill="#e0c490" stroke="#bd7a4a"/>
<rect x="5" y="5" width="4.3" height="4.3" fill="url(#pkgrad)"/><rect x="9.7" y="5" width="4.3" height="4.3" fill="url(#pkgrad)"/>
<rect x="5" y="9.7" width="4.3" height="4.3" fill="url(#pkgrad)"/><rect x="9.7" y="9.7" width="4.3" height="4.3" fill="url(#pkgrad)"/>
<line x1="9.5" y1="3" x2="9.5" y2="16" stroke="#6a4032" stroke-width="1.2"/>
<line x1="3" y1="9.5" x2="16" y2="9.5" stroke="#6a4032" stroke-width="1.2"/></svg>
<div class="t" id="t32" style="left:73px;top:460.34px;font-size:12px;color:#000;letter-spacing:-0.410px;">overRide6_7</div>
<svg style="position:absolute;left:40.7px;top:462.5px" width="6" height="10" viewBox="0 0 6 10"><path d="M0.8,0.8 L5,5 L0.8,9.2" stroke="#a8a8a8" stroke-width="1.5" fill="none"/></svg>
<svg style="position:absolute;left:51px;top:457px" width="18" height="18" viewBox="0 0 18 18"><rect x="4.5" y="4.5" width="10" height="10" fill="#e0c490" stroke="#bd7a4a"/>
<rect x="5" y="5" width="4.3" height="4.3" fill="url(#pkgrad)"/><rect x="9.7" y="5" width="4.3" height="4.3" fill="url(#pkgrad)"/>
<rect x="5" y="9.7" width="4.3" height="4.3" fill="url(#pkgrad)"/><rect x="9.7" y="9.7" width="4.3" height="4.3" fill="url(#pkgrad)"/>
<line x1="9.5" y1="3" x2="9.5" y2="16" stroke="#6a4032" stroke-width="1.2"/>
<line x1="3" y1="9.5" x2="16" y2="9.5" stroke="#6a4032" stroke-width="1.2"/><path d="M4.5,7.8 L9,17.2 H0 Z" fill="#fff" stroke="#fff" stroke-width="1" stroke-linejoin="round"/><path d="M4.5,9 L8,16.5 H1 Z" fill="#f6cf5a" stroke="#d8a030" stroke-width="0.9" stroke-linejoin="round"/><rect x="4" y="11.3" width="1.1" height="3" fill="#3a2a10"/><rect x="4" y="14.8" width="1.1" height="1" fill="#3a2a10"/></svg>
<div class="t" id="t33" style="left:73px;top:478.34px;font-size:12px;color:#000;letter-spacing:-0.575px;">overRide6_7_A</div>
<svg style="position:absolute;left:40.7px;top:480.5px" width="6" height="10" viewBox="0 0 6 10"><path d="M0.8,0.8 L5,5 L0.8,9.2" stroke="#a8a8a8" stroke-width="1.5" fill="none"/></svg>
<svg style="position:absolute;left:51px;top:475px" width="18" height="18" viewBox="0 0 18 18"><rect x="4.5" y="4.5" width="10" height="10" fill="#e0c490" stroke="#bd7a4a"/>
<rect x="5" y="5" width="4.3" height="4.3" fill="url(#pkgrad)"/><rect x="9.7" y="5" width="4.3" height="4.3" fill="url(#pkgrad)"/>
<rect x="5" y="9.7" width="4.3" height="4.3" fill="url(#pkgrad)"/><rect x="9.7" y="9.7" width="4.3" height="4.3" fill="url(#pkgrad)"/>
<line x1="9.5" y1="3" x2="9.5" y2="16" stroke="#6a4032" stroke-width="1.2"/>
<line x1="3" y1="9.5" x2="16" y2="9.5" stroke="#6a4032" stroke-width="1.2"/><path d="M4.5,7.8 L9,17.2 H0 Z" fill="#fff" stroke="#fff" stroke-width="1" stroke-linejoin="round"/><path d="M4.5,9 L8,16.5 H1 Z" fill="#f6cf5a" stroke="#d8a030" stroke-width="0.9" stroke-linejoin="round"/><rect x="4" y="11.3" width="1.1" height="3" fill="#3a2a10"/><rect x="4" y="14.8" width="1.1" height="1" fill="#3a2a10"/></svg>
<div class="t" id="t34" style="left:73px;top:496.34px;font-size:12px;color:#000;letter-spacing:0.377px;">polymorphism</div>
<svg style="position:absolute;left:40.7px;top:498.5px" width="6" height="10" viewBox="0 0 6 10"><path d="M0.8,0.8 L5,5 L0.8,9.2" stroke="#a8a8a8" stroke-width="1.5" fill="none"/></svg>
<svg style="position:absolute;left:51px;top:493px" width="18" height="18" viewBox="0 0 18 18"><rect x="4.5" y="4.5" width="10" height="10" fill="#e0c490" stroke="#bd7a4a"/>
<rect x="5" y="5" width="4.3" height="4.3" fill="url(#pkgrad)"/><rect x="9.7" y="5" width="4.3" height="4.3" fill="url(#pkgrad)"/>
<rect x="5" y="9.7" width="4.3" height="4.3" fill="url(#pkgrad)"/><rect x="9.7" y="9.7" width="4.3" height="4.3" fill="url(#pkgrad)"/>
<line x1="9.5" y1="3" x2="9.5" y2="16" stroke="#6a4032" stroke-width="1.2"/>
<line x1="3" y1="9.5" x2="16" y2="9.5" stroke="#6a4032" stroke-width="1.2"/><path d="M4.5,7.8 L9,17.2 H0 Z" fill="#fff" stroke="#fff" stroke-width="1" stroke-linejoin="round"/><path d="M4.5,9 L8,16.5 H1 Z" fill="#f6cf5a" stroke="#d8a030" stroke-width="0.9" stroke-linejoin="round"/><rect x="4" y="11.3" width="1.1" height="3" fill="#3a2a10"/><rect x="4" y="14.8" width="1.1" height="1" fill="#3a2a10"/></svg>
<div class="t" id="t35" style="left:73px;top:514.34px;font-size:12px;color:#000;letter-spacing:-0.250px;">sortV</div>
<svg style="position:absolute;left:40.7px;top:516.5px" width="6" height="10" viewBox="0 0 6 10"><path d="M0.8,0.8 L5,5 L0.8,9.2" stroke="#a8a8a8" stroke-width="1.5" fill="none"/></svg>
<svg style="position:absolute;left:51px;top:511px" width="18" height="18" viewBox="0 0 18 18"><rect x="4.5" y="4.5" width="10" height="10" fill="#e0c490" stroke="#bd7a4a"/>
<rect x="5" y="5" width="4.3" height="4.3" fill="url(#pkgrad)"/><rect x="9.7" y="5" width="4.3" height="4.3" fill="url(#pkgrad)"/>
<rect x="5" y="9.7" width="4.3" height="4.3" fill="url(#pkgrad)"/><rect x="9.7" y="9.7" width="4.3" height="4.3" fill="url(#pkgrad)"/>
<line x1="9.5" y1="3" x2="9.5" y2="16" stroke="#6a4032" stroke-width="1.2"/>
<line x1="3" y1="9.5" x2="16" y2="9.5" stroke="#6a4032" stroke-width="1.2"/></svg>
<div class="t" id="t36" style="left:73px;top:532.34px;font-size:12px;color:#000;letter-spacing:-0.250px;">sortV2</div>
<svg style="position:absolute;left:40.7px;top:534.5px" width="6" height="10" viewBox="0 0 6 10"><path d="M0.8,0.8 L5,5 L0.8,9.2" stroke="#a8a8a8" stroke-width="1.5" fill="none"/></svg>
<svg style="position:absolute;left:51px;top:529px" width="18" height="18" viewBox="0 0 18 18"><rect x="4.5" y="4.5" width="10" height="10" fill="#e0c490" stroke="#bd7a4a"/>
<rect x="5" y="5" width="4.3" height="4.3" fill="url(#pkgrad)"/><rect x="9.7" y="5" width="4.3" height="4.3" fill="url(#pkgrad)"/>
<rect x="5" y="9.7" width="4.3" height="4.3" fill="url(#pkgrad)"/><rect x="9.7" y="9.7" width="4.3" height="4.3" fill="url(#pkgrad)"/>
<line x1="9.5" y1="3" x2="9.5" y2="16" stroke="#6a4032" stroke-width="1.2"/>
<line x1="3" y1="9.5" x2="16" y2="9.5" stroke="#6a4032" stroke-width="1.2"/><rect x="1" y="9" width="7" height="8" fill="#d9243a"/><path d="M2.8,11.5 L6.2,14.8 M6.2,11.5 L2.8,14.8" stroke="#fff" stroke-width="1.4"/></svg>
<div class="t" id="t37" style="left:73px;top:550.34px;font-size:12px;color:#000;letter-spacing:0.083px;">student</div>
<svg style="position:absolute;left:40.7px;top:552.5px" width="6" height="10" viewBox="0 0 6 10"><path d="M0.8,0.8 L5,5 L0.8,9.2" stroke="#a8a8a8" stroke-width="1.5" fill="none"/></svg>
<svg style="position:absolute;left:51px;top:547px" width="18" height="18" viewBox="0 0 18 18"><rect x="4.5" y="4.5" width="10" height="10" fill="#e0c490" stroke="#bd7a4a"/>
<rect x="5" y="5" width="4.3" height="4.3" fill="url(#pkgrad)"/><rect x="9.7" y="5" width="4.3" height="4.3" fill="url(#pkgrad)"/>
<rect x="5" y="9.7" width="4.3" height="4.3" fill="url(#pkgrad)"/><rect x="9.7" y="9.7" width="4.3" height="4.3" fill="url(#pkgrad)"/>
<line x1="9.5" y1="3" x2="9.5" y2="16" stroke="#6a4032" stroke-width="1.2"/>
<line x1="3" y1="9.5" x2="16" y2="9.5" stroke="#6a4032" stroke-width="1.2"/><rect x="1" y="9" width="7" height="8" fill="#d9243a"/><path d="M2.8,11.5 L6.2,14.8 M6.2,11.5 L2.8,14.8" stroke="#fff" stroke-width="1.4"/></svg>
<div style="position:absolute;left:319px;top:71px;width:881px;height:600px;background:#d9d9d9;"></div>
<div style="position:absolute;left:320px;top:72px;width:880px;height:598px;background:#fff;"></div>
<div style="position:absolute;left:320px;top:72px;width:880px;height:24px;background:#f2f2f2;"></div>
<div style="position:absolute;left:320px;top:72px;width:232px;height:25px;background:#fff;"></div>
<div style="position:absolute;left:552px;top:96px;width:648px;height:1px;background:#d9d9d9;"></div>
<div style="position:absolute;left:552px;top:72px;width:1px;height:24px;background:#dadada;"></div>
<div class="t" id="t38" style="left:343px;top:78.84px;font-size:12px;color:#000;letter-spacing:-0.350px;">PX_CreateEmptyFile_lastname.java</div>
<svg style="position:absolute;left:326.5px;top:78px" width="12" height="14" viewBox="0 0 12 14"><path d="M0.5,0.5 H8 L11.5,4 V13.5 H0.5 Z" fill="#eaf2fa" stroke="#9a7a30"/>
<path d="M8,0.5 V4 H11.5 Z" fill="#f0d890"/>
<path d="M7,3 V9 Q7,11.5 4,11.5 H3" stroke="#2c68a8" stroke-width="1.8" fill="none"/></svg>
<svg style="position:absolute;left:534.5px;top:80.5px" width="10" height="10" viewBox="0 0 10 10"><path d="M0.7,0.7 L9.3,9.3 M9.3,0.7 L0.7,9.3" stroke="#1e1e1e" stroke-width="1.1"/></svg>
<div style="position:absolute;left:320px;top:97px;width:12px;height:556px;background:#f8f8f8;"></div>
<div style="position:absolute;left:355px;top:97px;width:1px;height:556px;background:#f0f0f0;"></div>
<div style="position:absolute;left:320px;top:157px;width:12px;height:480px;background:repeating-conic-gradient(#0c72de 0 25%, #ffffff 0 50%) 1px 0/2px 2px;"></div>
<div style="position:absolute;left:320px;top:157px;width:12px;height:1px;background:#0c72de;"></div>
<div style="position:absolute;left:320px;top:636px;width:12px;height:1px;background:#0c72de;"></div>
<div style="position:absolute;left:358px;top:622px;width:842px;height:15px;background:#e8f2fe;"></div>
<div style="position:absolute;left:320px;top:653px;width:880px;height:17px;background:#f8f8f8;"></div>
<div style="position:absolute;left:356px;top:654px;width:844px;height:16px;background:#f0f0f0;"></div>
<div class="m" style="left:332px;top:99.3px;width:14px;text-align:right;color:#787878">1</div>
<div class="m" style="left:358px;top:99.3px"><span class="k">package</span> fileCreation;</div>
<div class="m" style="left:332px;top:114.3px;width:14px;text-align:right;color:#787878">2</div>
<div class="m" style="left:332px;top:129.3px;width:14px;text-align:right;color:#787878">3</div>
<div class="m" style="left:358px;top:129.3px"><span class="k">import</span> java.io.File;</div>
<div class="m" style="left:332px;top:144.3px;width:14px;text-align:right;color:#787878">6</div>
<div class="m" style="left:332px;top:159.3px;width:14px;text-align:right;color:#787878">7</div>
<div class="m" style="left:358px;top:159.3px"><span class="c">// read all the comments</span></div>
<div class="m" style="left:332px;top:174.3px;width:14px;text-align:right;color:#787878">8</div>
<div class="m" style="left:358px;top:174.3px"><span class="c">// follow any instruction found in the comments.</span></div>
<div class="m" style="left:332px;top:189.3px;width:14px;text-align:right;color:#787878">9</div>
<div class="m" style="left:332px;top:204.3px;width:14px;text-align:right;color:#787878">10</div>
<div class="m" style="left:358px;top:204.3px"><span class="k">public</span> <span class="k">class</span> PX_CreateEmptyFile_lastname</div>
<div class="m" style="left:332px;top:219.3px;width:14px;text-align:right;color:#787878">11</div>
<div class="m" style="left:358px;top:219.3px">{</div>
<div class="m" style="left:332px;top:234.3px;width:14px;text-align:right;color:#787878">12</div>
<div class="m" style="left:358px;top:234.3px">    <span class="k">public</span> <span class="k">static</span> <span class="k">void</span> main(String[] <span class="v">args</span>)</div>
<div class="m" style="left:332px;top:249.3px;width:14px;text-align:right;color:#787878">13</div>
<div class="m" style="left:358px;top:249.3px">    {</div>
<div class="m" style="left:332px;top:264.3px;width:14px;text-align:right;color:#787878">14</div>
<div class="m" style="left:358px;top:264.3px">        <span class="a">@SuppressWarnings</span>(<span class="s">"resource"</span>)</div>
<div class="m" style="left:332px;top:279.3px;width:14px;text-align:right;color:#787878">15</div>
<div class="m" style="left:358px;top:279.3px">        Scanner <span class="v">scanner</span> = <span class="k">new</span> Scanner(System.<span class="f">in</span>);</div>
<div class="m" style="left:332px;top:294.3px;width:14px;text-align:right;color:#787878">16</div>
<div class="m" style="left:358px;top:294.3px">        <span class="c">// I entered file name: PX_JLCFile_Cusack.txt</span></div>
<div class="m" style="left:332px;top:309.3px;width:14px;text-align:right;color:#787878">17</div>
<div class="m" style="left:358px;top:309.3px">        <span class="c">// replace X with your class period</span></div>
<div class="m" style="left:332px;top:324.3px;width:14px;text-align:right;color:#787878">18</div>
<div class="m" style="left:358px;top:324.3px">        <span class="c">// replace JLC with your initials</span></div>
<div class="m" style="left:332px;top:339.3px;width:14px;text-align:right;color:#787878">19</div>
<div class="m" style="left:358px;top:339.3px">        <span class="c">// replace Cusack with your last name.</span></div>
<div class="m" style="left:332px;top:354.3px;width:14px;text-align:right;color:#787878">20</div>
<div class="m" style="left:358px;top:354.3px">        System.<span class="f">out</span>.println(<span class="s">"Enter the file name to create: "</span>);</div>
<div class="m" style="left:332px;top:369.3px;width:14px;text-align:right;color:#787878">21</div>
<div class="m" style="left:358px;top:369.3px">        String <span class="v">fileName</span> = <span class="v">scanner</span>.nextLine();</div>
<div class="m" style="left:332px;top:384.3px;width:14px;text-align:right;color:#787878">22</div>
<div class="m" style="left:332px;top:399.3px;width:14px;text-align:right;color:#787878">23</div>
<div class="m" style="left:358px;top:399.3px">        <span class="c">// replace JLC with your initials</span></div>
<div class="m" style="left:332px;top:414.3px;width:14px;text-align:right;color:#787878">24</div>
<div class="m" style="left:358px;top:414.3px">        File <span class="v">JLCfile</span> = <span class="k">new</span> File(<span class="v">fileName</span>);</div>
<div class="m" style="left:332px;top:429.3px;width:14px;text-align:right;color:#787878">25</div>
<div class="m" style="left:332px;top:444.3px;width:14px;text-align:right;color:#787878">26</div>
<div class="m" style="left:358px;top:444.3px">        <span class="k">try</span> {</div>
<div class="m" style="left:332px;top:459.3px;width:14px;text-align:right;color:#787878">27</div>
<div class="m" style="left:358px;top:459.3px">            <span class="k">if</span> (<span class="v">JLCfile</span>.createNewFile()) <span class="c">// replace JLC with your initials</span></div>
<div class="m" style="left:332px;top:474.3px;width:14px;text-align:right;color:#787878">28</div>
<div class="m" style="left:358px;top:474.3px">            {</div>
<div class="m" style="left:332px;top:489.3px;width:14px;text-align:right;color:#787878">29</div>
<div class="m" style="left:358px;top:489.3px">                System.<span class="f">out</span>.println(<span class="s">"File created: "</span> + <span class="v">JLCfile</span>.getName()); <span class="c">// replace JLC with your initials</span></div>
<div class="m" style="left:332px;top:504.3px;width:14px;text-align:right;color:#787878">30</div>
<div class="m" style="left:358px;top:504.3px">            } <span class="k">else</span> {</div>
<div class="m" style="left:332px;top:519.3px;width:14px;text-align:right;color:#787878">31</div>
<div class="m" style="left:358px;top:519.3px">                System.<span class="f">out</span>.println(<span class="s">"File already exists."</span>);</div>
<div class="m" style="left:332px;top:534.3px;width:14px;text-align:right;color:#787878">32</div>
<div class="m" style="left:358px;top:534.3px">            }</div>
<div class="m" style="left:332px;top:549.3px;width:14px;text-align:right;color:#787878">33</div>
<div class="m" style="left:358px;top:549.3px">        } <span class="k">catch</span> (IOException <span class="v">e</span>) {</div>
<div class="m" style="left:332px;top:564.3px;width:14px;text-align:right;color:#787878">34</div>
<div class="m" style="left:358px;top:564.3px">            System.<span class="f">out</span>.println(<span class="s">"An error occurred."</span>);</div>
<div class="m" style="left:332px;top:579.3px;width:14px;text-align:right;color:#787878">35</div>
<div class="m" style="left:358px;top:579.3px">            <span class="v">e</span>.printStackTrace();</div>
<div class="m" style="left:332px;top:594.3px;width:14px;text-align:right;color:#787878">36</div>
<div class="m" style="left:358px;top:594.3px">        }</div>
<div class="m" style="left:332px;top:609.3px;width:14px;text-align:right;color:#787878">37</div>
<div class="m" style="left:358px;top:609.3px">    }</div>
<div class="m" style="left:332px;top:624.3px;width:14px;text-align:right;color:#787878">38</div>
<div class="m" style="left:358px;top:624.3px">}</div>
<svg style="position:absolute;left:346.5px;top:130px" width="9" height="9" viewBox="0 0 9 9"><circle cx="4.5" cy="4.5" r="4" fill="#e6ebf2" stroke="#8a9ab0" stroke-width="0.9"/><path d="M2.3,4.5 H6.7 M4.5,2.3 V6.7" stroke="#202a40" stroke-width="1.2"/></svg>
<svg style="position:absolute;left:346.5px;top:235px" width="9" height="9" viewBox="0 0 9 9"><circle cx="4.5" cy="4.5" r="4" fill="#eef1f5" stroke="#9aa6b8" stroke-width="0.9"/><path d="M2.3,4.5 H6.7" stroke="#505a70" stroke-width="1.2"/></svg>
<svg style="position:absolute;left:497px;top:129px" width="10" height="13" viewBox="0 0 10 13"><rect x="0.5" y="0.5" width="8" height="11" fill="none" stroke="#a0a0a0"/><rect x="2" y="9" width="1" height="1" fill="#606060"/><rect x="5" y="9" width="1" height="1" fill="#606060"/></svg>
<svg style="position:absolute;left:357px;top:217px" width="9" height="15" viewBox="0 0 9 15"><rect x="0.5" y="0.5" width="7" height="13.5" fill="none" stroke="#8a5070"/></svg>
<svg style="position:absolute;left:491px;top:349px" width="44" height="4" viewBox="0 0 44 4"><path d="M0,3 L2,0.8 L4,3 L6,0.8 L8,3 L10,0.8 L12,3 L14,0.8 L16,3 L18,0.8 L20,3 L22,0.8 L24,3 L26,0.8 L28,3 L30,0.8 L32,3 L34,0.8 L36,3 L38,0.8 L40,3 L42,0.8" stroke="#ff6030" stroke-width="0.9" fill="none"/></svg>
<svg style="position:absolute;left:360px;top:657px" width="8" height="10" viewBox="0 0 8 10"><path d="M6.3,1 L2,4.8 L6.3,8.6" stroke="#b4b4b4" stroke-width="2" fill="none"/></svg>
<div style="position:absolute;left:319px;top:675px;width:881px;height:108px;background:#d9d9d9;"></div>
<div style="position:absolute;left:320px;top:676px;width:880px;height:107px;background:#fff;"></div>
<div style="position:absolute;left:320px;top:676px;width:880px;height:24px;background:#e5e5e5;"></div>
<div style="position:absolute;left:320px;top:676px;width:93px;height:24px;background:#f0f0f0;"></div>
<div style="position:absolute;left:413px;top:676px;width:1px;height:24px;background:#dadada;"></div>
<div style="position:absolute;left:320px;top:700px;width:880px;height:16px;background:#f2f2f2;"></div>
<div style="position:absolute;left:320px;top:716px;width:880px;height:1px;background:#a0a0a0;"></div>
<div class="t" id="t39" style="left:344px;top:682.84px;font-size:12px;color:#000;letter-spacing:-0.350px;">Console</div>
<svg style="position:absolute;left:325.5px;top:682px" width="14" height="13" viewBox="0 0 14 13"><rect x="0.8" y="0.8" width="12.4" height="9" rx="1.5" fill="#fff" stroke="#2e62ad" stroke-width="1.6"/>
<line x1="3.5" y1="4" x2="7" y2="4" stroke="#2e62ad" stroke-width="1"/><line x1="3.5" y1="6.5" x2="10.5" y2="6.5" stroke="#2e62ad" stroke-width="1"/>
<rect x="5.5" y="10" width="3" height="1.5" fill="#2e62ad"/><rect x="2" y="11.3" width="10" height="1.7" fill="#2e62ad"/></svg>
<svg style="position:absolute;left:395.5px;top:684.5px" width="10" height="10" viewBox="0 0 10 10"><path d="M0.7,0.7 L9.3,9.3 M9.3,0.7 L0.7,9.3" stroke="#1e1e1e" stroke-width="1.1"/></svg>
<svg style="position:absolute;left:418px;top:682px" width="15" height="14" viewBox="0 0 15 14"><path d="M0.5,0.5 H7 L10,3.5 V13.5 H0.5 Z" fill="#fafafa" stroke="#aa9a70"/>
<path d="M7,0.5 V3.5 H10 Z" fill="#f0d890"/>
<g stroke="#6a8ac0" stroke-width="0.8"><line x1="2" y1="3" x2="6" y2="3"/><line x1="2" y1="5" x2="8" y2="5"/><line x1="2" y1="7" x2="8" y2="7"/></g>
<rect x="3.5" y="8.5" width="11" height="5" fill="#000"/><rect x="4.5" y="9.5" width="4.5" height="3" fill="#1fd21f"/><rect x="9" y="9.5" width="4.5" height="3" fill="#e01b1b"/></svg>
<div class="t" id="t40" style="left:437px;top:682.84px;font-size:12px;color:#000;letter-spacing:-0.321px;">Coverage</div>
<div class="t" style="left:321px;top:703.34px;font-size:12px;color:#000;letter-spacing:-0.120px;">&lt;terminated&gt; PX_CreateEmptyFile_lastname [Java Application] C:\Users\JoePhotos\.p2\pool\plugins\org.eclipse.justj.openjdk.hotspot.jre.full.win32.x86_64_17.0.7.v20230425-1502\jre\bin\javaw.exe</div>
<div class="m" style="left:322px;top:720.3px">Enter the file name to create: 
<span style="color:#00c87d">PX_JLCFile_Cusack.txt</span>
File created: PX_JLCFile_Cusack.txt</div>
</body></html>
